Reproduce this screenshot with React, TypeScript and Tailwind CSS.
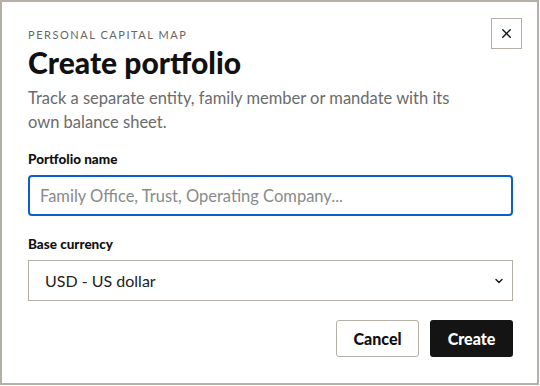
import { X, ChevronDown } from 'lucide-react';

export default function App() {
    return (
        <div className="w-[540px] h-[386px] bg-white font-['Lato','Noto_Sans',sans-serif]">
            <div className="relative w-[539px] h-[385px] border-2 border-[#b4b0a7] bg-white pl-[26px] pr-[24px] pt-[25px]">
                <button
                    type="button"
                    aria-label="Close"
                    className="absolute right-[15px] top-[16px] w-[31px] h-[31px] border border-[#b4b0a7] flex items-center justify-center text-[#111]"
                >
                    <X size={15} strokeWidth={2.2} />
                </button>

                <div className="text-[11px] tracking-[0.14em] text-[#666] leading-[16px]">
                    PERSONAL CAPITAL MAP
                </div>
                <h1 className="text-[30px] font-black text-[#111] leading-[36px] mt-[1px]">
                    Create portfolio
                </h1>
                <p className="max-w-[432px] text-[16.5px] text-[#6b6b6b] leading-[24px] mt-[6px]">
                    Track a separate entity, family member or mandate with its own balance sheet.
                </p>

                <div className="mt-[17px]">
                    <label className="block text-[13.5px] font-black text-[#111] leading-[16px]">
                        Portfolio name
                    </label>
                    <input
                        className="mt-[8px] w-full h-[41px] rounded-[4px] border-2 border-[#0a5fd0] px-[10px] text-[16.5px] text-[#333] outline-none placeholder:text-[#8a8a8a]"
                        placeholder="Family Office, Trust, Operating Company..."
                    />
                </div>

                <div className="mt-[20px]">
                    <label className="block text-[13.5px] font-black text-[#111] leading-[16px]">
                        Base currency
                    </label>
                    <div className="relative mt-[8px]">
                        <select className="w-full h-[41px] appearance-none border border-[#b4b0a7] bg-white px-[16px] text-[16px] text-[#222] outline-none">
                            <option>USD - US dollar</option>
                        </select>
                        <ChevronDown
                            size={12}
                            strokeWidth={3}
                            className="absolute right-[8px] top-[15px] text-[#222] pointer-events-none"
                        />
                    </div>
                </div>

                <div className="mt-[19px] flex justify-end gap-[11px]">
                    <button
                        type="button"
                        className="w-[83px] h-[37px] rounded-[3px] border border-[#b4b0a7] bg-white text-[16px] font-black text-[#111]"
                    >
                        Cancel
                    </button>
                    <button
                        type="button"
                        className="w-[83px] h-[37px] rounded-[3px] bg-[#141414] text-[16px] font-black text-white"
                    >
                        Create
                    </button>
                </div>
            </div>
        </div>
    );
}
